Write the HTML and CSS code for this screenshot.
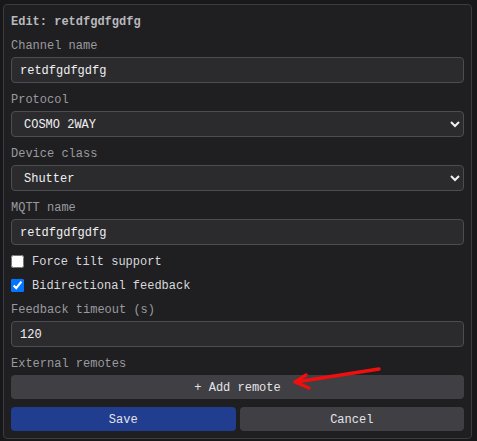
FILE: index.html
```html
<!DOCTYPE html>
<html lang="en">

<head>
    <meta charset="UTF-8">
    <meta name="viewport" content="width=device-width, initial-scale=1.0">
    <title>Edit channel</title>
    <link rel="stylesheet" href="styles.css">
</head>

<body>
    <div class="panel">
        <h3 class="panel-title">Edit: retdfgdfgdfg</h3>
        <form id="channelForm" class="channel-form">
            <div class="field">
                <label for="channelName">Channel name</label>
                <input type="text" id="channelName" value="retdfgdfgdfg">
            </div>
            <div class="field">
                <label for="protocol">Protocol</label>
                <select id="protocol">
                    <option selected>COSMO 2WAY</option>
                    <option>COSMO</option>
                </select>
            </div>
            <div class="field">
                <label for="deviceClass">Device class</label>
                <select id="deviceClass">
                    <option selected>Shutter</option>
                    <option>Light</option>
                </select>
            </div>
            <div class="field">
                <label for="mqttName">MQTT name</label>
                <input type="text" id="mqttName" value="retdfgdfgdfg">
            </div>
            <div class="checks">
                <label class="check"><input type="checkbox">Force tilt support</label>
                <label class="check"><input type="checkbox" checked>Bidirectional feedback</label>
            </div>
            <div class="field">
                <label for="timeout">Feedback timeout (s)</label>
                <input type="text" id="timeout" value="120">
            </div>
            <div class="field field-remotes">
                <label>External remotes</label>
                <button type="button" class="btn btn-grey">+ Add remote</button>
            </div>
            <div class="actions">
                <button type="submit" class="btn btn-save">Save</button>
                <button type="button" class="btn btn-grey">Cancel</button>
            </div>
        </form>
    </div>

    <!-- annotation arrow -->
    <svg class="arrow" width="477" height="441" viewBox="0 0 477 441">
        <g fill="none" stroke="#f00f0f" stroke-width="3.5" stroke-linecap="round" stroke-linejoin="round">
            <path d="M379 369 L296 382" />
            <path d="M306 375 L295 382 L309 388" />
        </g>
    </svg>
</body>

</html>
```

FILE: styles.css
```css
body {
    margin: 0;
    padding: 0;
    background: #18181a;
    font-family: 'Liberation Mono', monospace;
    font-size: 12px;
    color: #e6e6e8;
}

.panel {
    box-sizing: border-box;
    width: 469px;
    margin: 4px 5px 0 3px;
    padding: 7px;
    background: #1f1f21;
    border: 1px solid #3b3b40;
    border-radius: 4px;
}

.panel-title {
    margin: 0 0 6px 0;
    padding-top: 2px;
    font-size: 12px;
    line-height: 16px;
    font-weight: bold;
    color: #b9b9be;
}

.channel-form {
    display: flex;
    flex-direction: column;
    margin: 0;
}

.field {
    display: flex;
    flex-direction: column;
    margin-bottom: 7px;
}

.field label {
    padding-top: 2px;
    line-height: 16px;
    color: #9a9a9f;
    margin-bottom: 3px;
}

.field input[type="text"],
.field select {
    box-sizing: border-box;
    width: 100%;
    height: 26px;
    margin: 0;
    padding: 1px 8px 0 8px;
    font-family: inherit;
    font-size: 12px;
    color: #f0f0f2;
    background-color: #2b2b2e;
    border: 1px solid #4c4c53;
    border-radius: 4px;
    outline: none;
}

.checks {
    display: flex;
    flex-direction: column;
    gap: 5px;
    margin-bottom: 5px;
}

.check {
    display: flex;
    align-items: center;
    height: 19px;
    color: #d8d8dc;
}

.check input {
    width: 13px;
    height: 13px;
    margin: 3px 8px 3px 0;
}

.field-remotes {
    margin-bottom: 8px;
}

.btn {
    box-sizing: border-box;
    height: 24px;
    padding: 2px 0 0 0;
    border: none;
    border-radius: 4px;
    font-family: inherit;
    font-size: 12px;
    color: #e4e4e8;
    cursor: pointer;
}

.btn-grey {
    background: #3f3f44;
}

.btn-save {
    background: #213d8f;
}

.actions {
    display: flex;
    gap: 4px;
}

.actions .btn {
    flex: 1;
}

.arrow {
    position: absolute;
    top: 0;
    left: 0;
    pointer-events: none;
}
```
